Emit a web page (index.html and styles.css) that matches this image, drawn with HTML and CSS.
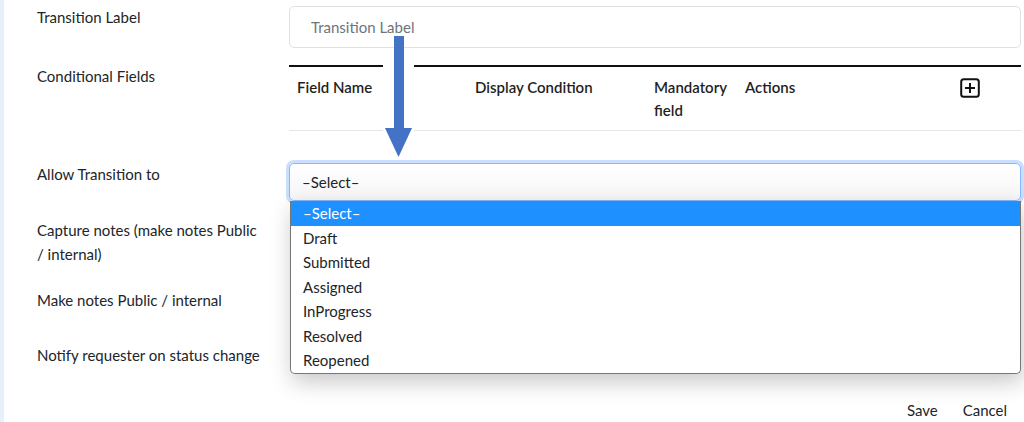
FILE: index.html
```html
<!DOCTYPE html>
<html lang="en">
<head>
<meta charset="utf-8">
<title>Transition</title>
<link rel="stylesheet" href="styles.css">
</head>
<body>
<div class="page">
  <div class="form">
    <div class="lbl row1">Transition Label</div>
    <div class="ctl row1"><div class="input placeholder">Transition Label</div></div>

    <div class="lbl row2">Conditional Fields</div>
    <div class="ctl row2">
      <table class="cond">
        <thead>
          <tr>
            <th class="c1">Field Name</th>
            <th class="c2">Display Condition</th>
            <th class="c3">Mandatory<br>field</th>
            <th class="c4">Actions</th>
            <th class="c5">
              <svg class="plus" viewBox="0 0 20 20" width="20" height="20">
                <rect x="1.2" y="1.2" width="17.6" height="17.6" rx="2.5" fill="none" stroke="#111" stroke-width="2"/>
                <path d="M10 5v10M5 10h10" stroke="#111" stroke-width="2" fill="none"/>
              </svg>
            </th>
          </tr>
        </thead>
      </table>
    </div>

    <div class="lbl row3">Allow Transition to</div>
    <div class="ctl row3"><div class="select">–Select–</div></div>

    <div class="lbl row4"><span class="wrap">Capture notes (make notes Public / internal)</span></div>
    <div class="ctl row4"></div>

    <div class="lbl row5">Make notes Public / internal</div>
    <div class="ctl row5"></div>

    <div class="lbl row6">Notify requester on status change</div>
    <div class="ctl row6"></div>
  </div>

  <div class="footer">
    <span class="btn">Save</span>
    <span class="btn">Cancel</span>
  </div>

  <ul class="dropdown">
    <li class="active">–Select–</li>
    <li>Draft</li>
    <li>Submitted</li>
    <li>Assigned</li>
    <li>InProgress</li>
    <li>Resolved</li>
    <li>Reopened</li>
  </ul>

  <svg class="arrow" viewBox="0 0 31 125" width="31" height="125">
    <rect x="0" y="14" width="31" height="111" fill="#fff"/>
    <rect x="11" y="2" width="10" height="94" fill="#4472c4"/>
    <polygon points="2,94 29,94 15.5,123" fill="#4472c4"/>
  </svg>
</div>
</body>
</html>
```

FILE: styles.css
```css
* { box-sizing: border-box; }
html, body { margin: 0; padding: 0; background: #fff; }
body {
  font-family: "Lato", "Noto Sans", sans-serif;
  font-size: 15px;
  color: #212529;
}
.page {
  position: relative;
  width: 1024px;
  height: 422px;
  overflow: hidden;
  border-left: 4px solid #e7f0fa;
  padding-left: 33px;
  padding-right: 3px;
}
.form {
  display: grid;
  grid-template-columns: 252px 732px;
  padding-top: 6px;
}
.lbl { line-height: 22px; padding-right: 10px; }
.row1 { height: 42px; margin-bottom: 17px; }
.input {
  height: 42px;
  border: 1px solid #dee2e6;
  border-radius: 5px;
  padding: 10px 21px;
  line-height: 20px;
}
.placeholder { color: #6c757d; }

.row2 { height: 66px; }
.cond {
  width: 732px;
  border-collapse: collapse;
  table-layout: fixed;
  border-top: 2px solid #111;
}
.cond th {
  text-align: left;
  font-weight: 600;
  line-height: 23px;
  padding: 9px 8px 8px;
  vertical-align: top;
  border-bottom: 1px solid #e6e6e6;
  color: #1f1f1f;
}
.c1 { width: 178px; }
.c2 { width: 179px; }
.c3 { width: 91px; }
.c4 { width: 215px; }
.c5 { width: 69px; }
.plus { display: block; margin-top: 2px; }

.row3 { margin-top: 32px; height: 38px; }
.lbl.row3 { padding-top: 0; }
.select {
  height: 38px;
  border: 1px solid #86b7fe;
  border-radius: 5px;
  box-shadow: 0 0 0 3px rgba(13, 110, 253, 0.22);
  padding: 8px 12px;
  line-height: 20px;
  background: linear-gradient(#fff, #f6f6f6);
}

.row4 { margin-top: 17px; height: 48px; }
.lbl.row4 { line-height: 24px; }
.wrap { display: block; max-width: 220px; }
.row5 { margin-top: 23px; height: 22px; }
.row6 { margin-top: 33px; height: 22px; }

.footer {
  display: flex;
  justify-content: flex-end;
  gap: 25px;
  margin-top: 33px;
  padding-right: 14px;
  line-height: 22px;
}
.btn { color: #212529; }

.dropdown {
  position: absolute;
  left: 286px;
  top: 201px;
  width: 731px;
  margin: 0;
  padding: 0;
  list-style: none;
  background: #fff;
  border: 1px solid #767676;
  border-top: none;
  border-radius: 0 0 5px 5px;
  box-shadow: 2px 8px 22px rgba(0, 0, 0, 0.22);
  overflow: hidden;
}
.dropdown li {
  height: 24.5px;
  line-height: 24.5px;
  padding-left: 12px;
  color: #212529;
}
.dropdown li.active {
  background: #1e90ff;
  color: #fff;
}

.arrow {
  position: absolute;
  left: 379px;
  top: 34px;
}
```
